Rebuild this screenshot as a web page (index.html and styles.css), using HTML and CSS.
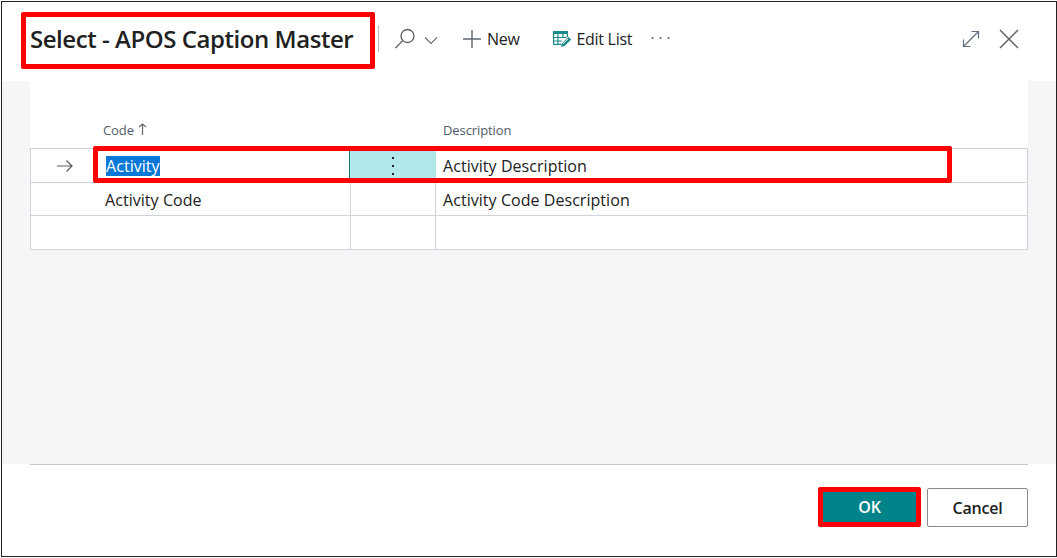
FILE: index.html
```html
<!DOCTYPE html>
<html lang="en">
<head>
<meta charset="utf-8">
<title>Select - APOS Caption Master</title>
<link rel="stylesheet" href="styles.css">
</head>
<body>
<div class="dialog">
  <header class="header">
    <h1 class="title">Select - APOS Caption Master</h1>
    <span class="divider"></span>
    <svg class="icon search" width="24" height="24" viewBox="0 0 24 24" fill="none" stroke="#5f5f5f" stroke-width="1.3"><circle cx="14.5" cy="9" r="6.5"/><path d="M9.8 13.6 2.5 21"/></svg>
    <svg class="icon chev" width="14" height="9" viewBox="0 0 14 9" fill="none" stroke="#6f6f6f" stroke-width="1.1"><path d="M1 1.5 7 7.5 13 1.5"/></svg>
    <button class="action new">
      <svg width="20" height="20" viewBox="0 0 20 20" fill="none" stroke="#5d6670" stroke-width="1.4"><path d="M10 1v18M1 10h18"/></svg>
      New
    </button>
    <button class="action edit">
      <svg width="20" height="20" viewBox="0 0 20 20"><path fill="#1d8a8c" d="M1 2h15v3H1z"/><path fill="none" stroke="#1d8a8c" stroke-width="1.2" d="M1.6 5v10.4h8M6 5v10M11 5v4M1.6 8.5h13M1.6 12h8M15.4 5v3"/><path fill="#1d8a8c" d="M9 18l1-3.6 6.6-6.4 2.6 2.6-6.6 6.4z"/><path stroke="#fff" stroke-width=".8" d="M11 15l5-5"/></svg>
      Edit List
    </button>
    <svg class="more" width="19" height="4" viewBox="0 0 19 4" fill="#666"><circle cx="1.5" cy="2" r="1.1"/><circle cx="9.5" cy="2" r="1.1"/><circle cx="17.5" cy="2" r="1.1"/></svg>
    <span class="spacer"></span>
    <svg class="icon expand" width="20" height="20" viewBox="0 0 20 20" fill="none" stroke="#5f7180" stroke-width="1.2"><path d="M2.5 17.5 17.5 2.5M10.5 2.5h7v7M2.5 10.5v7h7"/></svg>
    <svg class="icon close" width="22" height="22" viewBox="0 0 22 22" fill="none" stroke="#5f6468" stroke-width="1.5"><path d="M2 2l18 18M20 2 2 20"/></svg>
  </header>

  <main class="content">
    <section class="panel">
      <div class="grid">
        <div class="head"></div>
        <div class="head">Code <svg class="sort" width="9" height="12" viewBox="0 0 9 12" fill="none" stroke="#666" stroke-width="1.2"><path d="M4.5 12V1M1 4 4.5 1 8 4"/></svg></div>
        <div class="head"></div>
        <div class="head head-desc">Description</div>

        <div class="cell arrow-cell first">
          <svg width="16" height="14" viewBox="0 0 16 14" fill="none" stroke="#5a5a5a" stroke-width="1.2"><path d="M0 7h15M9.5 1.5 15 7l-5.5 5.5"/></svg>
        </div>
        <div class="cell first code"><span class="selected">Activity</span></div>
        <div class="cell first dots"><svg width="2" height="18" viewBox="0 0 2 18" fill="#222"><rect width="2" height="2"/><rect y="8" width="2" height="2"/><rect y="16" width="2" height="2"/></svg></div>
        <div class="cell first desc">Activity Description</div>

        <div class="cell"></div>
        <div class="cell code lower">Activity Code</div>
        <div class="cell mid"></div>
        <div class="cell desc lower">Activity Code Description</div>

        <div class="cell"></div>
        <div class="cell"></div>
        <div class="cell mid"></div>
        <div class="cell desc"></div>
      </div>
    </section>
    <div class="row-mark"></div>
  </main>

  <footer class="footer">
    <div class="footer-inner">
      <button class="btn ok">OK</button>
      <button class="btn cancel">Cancel</button>
    </div>
  </footer>
</div>
</body>
</html>
```
FILE: styles.css
```css
* { box-sizing: border-box; }
html, body { margin: 0; padding: 0; background: #fff; }
body { width: 1057px; height: 558px; overflow: hidden; padding: 1px 0 0 1px; font-family: "Open Sans", "Noto Sans", sans-serif; color: #212121; }
.dialog { width: 1056px; height: 556px; border: 1px solid #222; display: flex; flex-direction: column; position: relative; background: #fff; }

.header { height: 79px; flex: none; display: flex; align-items: center; padding: 0 36px 6px 19px; }
.title { margin: 4px 0 0; width: 354px; height: 57px; flex: none; border: 5px solid #f00; border-radius: 2px; font-size: 24px; font-weight: 600; line-height: 44px; padding-left: 4px; white-space: nowrap; letter-spacing: -0.45px; color: #212121; }
.divider { width: 1px; height: 27px; background: #b4bac0; margin: 0 0 0 3px; }
.icon { flex: none; display: block; }
.search { margin: 0 0 0 14px; }
.chev { margin: 3px 0 0 7px; }
button { font-family: inherit; color: inherit; background: none; border: 0; padding: 0; }
.action { display: flex; align-items: center; font-size: 16px; letter-spacing: -0.3px; gap: 5px; }
.new { margin-left: 24px; }
.edit { margin-left: 32px; }
.more { flex: none; display: block; margin: -2px 0 0 19px; }
.spacer { flex: 1; }
.expand { margin-right: 17px; }

.content { flex: 1; background: #f5f6f8; padding: 0 28px; position: relative; min-height: 0; }
.panel { background: #fff; width: 998px; }
.grid { display: grid; grid-template-columns: 65px 255px 86px 592px; grid-template-rows: 68px 34px 33px 34px; font-size: 16px; letter-spacing: 0.05px; }
.head { font-size: 13px; color: #505c68; letter-spacing: -0.1px; padding: 40px 0 0 8px; line-height: 18px; border-bottom: 1px solid #d0d3d9; }
.head-desc { padding-left: 7px; }
.sort { margin-left: 1px; }
.cell { display: flex; align-items: center; border-bottom: 1px solid #d0d3d9; }
.grid > .cell:nth-child(4n+1) { border-left: 1px solid #d0d3d9; }
.grid > .cell:nth-child(4n) { border-right: 1px solid #d0d3d9; }
.arrow-cell { padding-left: 26px; }
.code { padding-left: 10px; }
.lower { padding-top: 2px; }
.selected { background: #0a78d7; color: #fff; height: 20px; line-height: 20px; margin-left: 1px; }
.dots { background: #b2e8ec; border-left: 1px solid #17797b; margin-left: -1px; justify-content: center; }
.mid { border-left: 1px solid #d0d3d9; border-right: 1px solid #d0d3d9; }
.desc { padding-left: 7px; }
.row-mark { position: absolute; left: 91px; top: 65px; width: 859px; height: 37px; border: 5px solid #f00; border-radius: 2px; pointer-events: none; }

.footer { height: 92px; flex: none; padding: 0 28px; }
.footer-inner { border-top: 1px solid #c9c9c9; height: 100%; display: flex; justify-content: flex-end; align-items: flex-start; gap: 6px; padding-top: 22px; }
.btn { width: 101px; height: 39px; margin-top: 1px; font-size: 16px; font-weight: 600; border-radius: 2px; letter-spacing: -0.2px; }
.ok { width: 103px; height: 40px; margin-top: 0; background: #008489; color: #fff; border: 5px solid #f00; }
.cancel { background: #fff; border: 1px solid #8a8a8a; color: #212121; }
```
